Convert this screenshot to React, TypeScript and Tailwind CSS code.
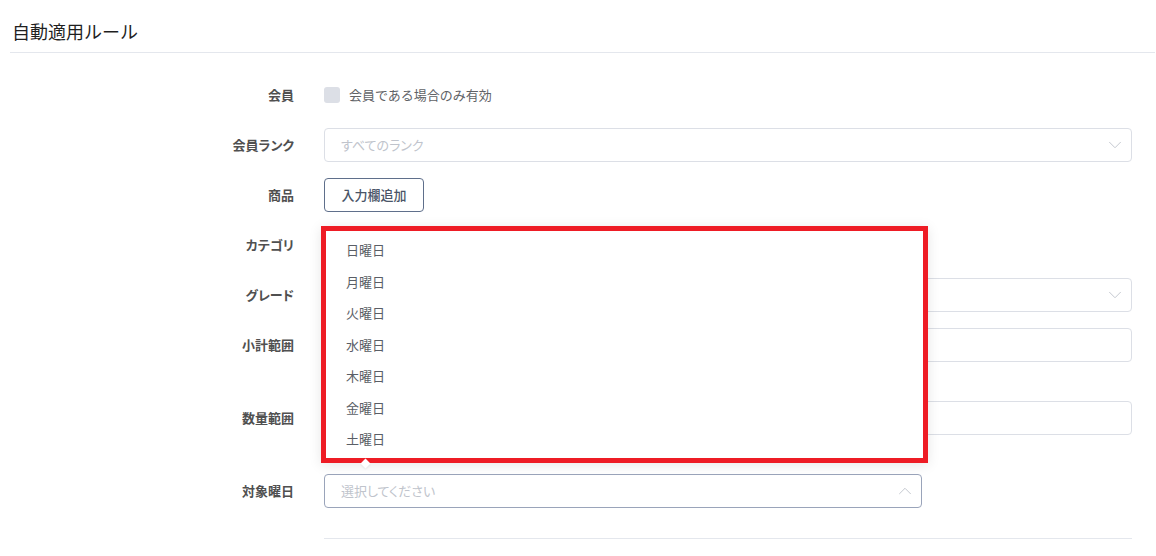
import { ChevronDown, ChevronUp } from "lucide-react";

const days = ["日曜日", "月曜日", "火曜日", "水曜日", "木曜日", "金曜日", "土曜日"];

function Row({ label, children, extra = "" }: { label: string; children?: React.ReactNode; extra?: string }) {
  return (
    <div className={`flex h-[34px] items-center ${extra}`}>
      <div className="w-[294px] shrink-0 text-right text-[13px] font-semibold text-[#505050] [font-feature-settings:'palt']">
        {label}
      </div>
      <div className="ml-[30px] flex items-center">{children}</div>
    </div>
  );
}

function Select({ placeholder = "", width = "w-[808px]", open = false }: { placeholder?: string; width?: string; open?: boolean }) {
  return (
    <div
      className={`flex h-[34px] ${width} items-center justify-between rounded-[4px] border bg-white pl-4 pr-[5px] ${
        open ? "border-[#9aa4ba]" : "border-[#dcdfe6]"
      }`}
    >
      <span className="text-[13px] text-[#c0c4cc] [font-feature-settings:'palt']">{placeholder}</span>
      {open ? (
        <ChevronUp className="h-[22px] w-[22px] text-[#c0c4cc]" strokeWidth={1} />
      ) : (
        <ChevronDown className="h-[22px] w-[22px] text-[#c0c4cc]" strokeWidth={1} />
      )}
    </div>
  );
}

function Input() {
  return <div className="h-[34px] w-[808px] rounded-[4px] border border-[#dcdfe6] bg-white" />;
}

export default function App() {
  return (
    <div
      className="relative h-[556px] w-[1156px] overflow-hidden bg-white"
      style={{ fontFamily: '"Noto Sans CJK JP", "Noto Sans", sans-serif' }}
    >
      <div className="ml-[10px] mr-[1px] border-b border-[#e4e7ed] pb-[8px] pt-[18px]">
        <h2 className="ml-[2px] text-[18px] leading-[26px] font-normal text-[#1f1f1f]">自動適用ルール</h2>
      </div>

      <div className="mt-[25px] flex flex-col gap-4">
        <Row label="会員">
          <span className="h-[16px] w-[16px] rounded-[3px] bg-[#dcdfe6]" />
          <span className="ml-[9px] text-[13px] text-[#606266]">会員である場合のみ有効</span>
        </Row>
        <Row label="会員ランク">
          <Select placeholder="すべてのランク" />
        </Row>
        <Row label="商品">
          <button className="flex h-[34px] w-[100px] items-center justify-center rounded-[4px] border border-[#5f6f8b] bg-white text-[13px] font-medium text-[#4a5568]">
            入力欄追加
          </button>
        </Row>
        <Row label="カテゴリ" />
        <Row label="グレード">
          <Select />
        </Row>
        <Row label="小計範囲" extra="mb-[23px]">
          <Input />
        </Row>
        <Row label="数量範囲" extra="mb-[23px]">
          <Input />
        </Row>
        <Row label="対象曜日">
          <Select placeholder="選択してください" width="w-[598px]" open />
        </Row>
      </div>

      <div className="ml-[324px] mt-[30px] w-[808px] border-t border-[#e4e7ed]" />

      <div className="absolute left-[321px] top-[226px] h-[237px] w-[607px] border-[5px] border-[#ee1c25] bg-white pt-[3px] shadow-[0_2px_12px_rgba(0,0,0,0.1)]">
        {days.map((d) => (
          <div key={d} className="flex h-[31.5px] items-center pl-5 text-[13px] text-[#5a5e66]">
            {d}
          </div>
        ))}
      </div>
      <div className="absolute left-[362px] top-[460px] h-[7px] w-[7px] rotate-45 bg-white shadow-[1px_1px_2px_rgba(0,0,0,0.06)]" />
    </div>
  );
}
